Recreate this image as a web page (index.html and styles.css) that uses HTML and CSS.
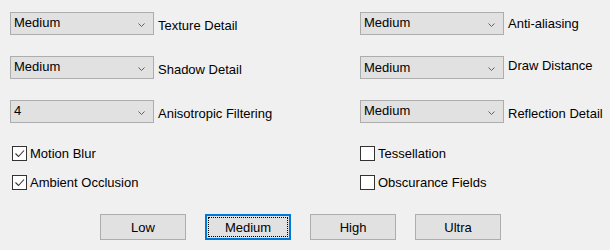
FILE: index.html
```html
<!DOCTYPE html>
<html>
<head>
<meta charset="utf-8">
<link rel="stylesheet" href="styles.css">
</head>
<body>
<div class="panel">
  <div class="combos">
    <div class="row">
      <div class="combo"><span>Medium</span><svg class="chev" width="7" height="4" viewBox="0 0 7 4"><polyline points="0.5,0.5 3.5,3.5 6.5,0.5" fill="none" stroke="#606060" stroke-width="1"/></svg></div>
      <span class="lbl off6">Texture Detail</span>
    </div>
    <div class="row">
      <div class="combo"><span>Medium</span><svg class="chev" width="7" height="4" viewBox="0 0 7 4"><polyline points="0.5,0.5 3.5,3.5 6.5,0.5" fill="none" stroke="#606060" stroke-width="1"/></svg></div>
      <span class="lbl off4">Anti-aliasing</span>
    </div>
    <div class="row">
      <div class="combo"><span>Medium</span><svg class="chev" width="7" height="4" viewBox="0 0 7 4"><polyline points="0.5,0.5 3.5,3.5 6.5,0.5" fill="none" stroke="#606060" stroke-width="1"/></svg></div>
      <span class="lbl off6">Shadow Detail</span>
    </div>
    <div class="row">
      <div class="combo"><span class="low1">Medium</span><svg class="chev" width="7" height="4" viewBox="0 0 7 4"><polyline points="0.5,0.5 3.5,3.5 6.5,0.5" fill="none" stroke="#606060" stroke-width="1"/></svg></div>
      <span class="lbl off2">Draw Distance</span>
    </div>
    <div class="row">
      <div class="combo"><span>4</span><svg class="chev" width="7" height="4" viewBox="0 0 7 4"><polyline points="0.5,0.5 3.5,3.5 6.5,0.5" fill="none" stroke="#606060" stroke-width="1"/></svg></div>
      <span class="lbl off6">Anisotropic Filtering</span>
    </div>
    <div class="row">
      <div class="combo"><span>Medium</span><svg class="chev" width="7" height="4" viewBox="0 0 7 4"><polyline points="0.5,0.5 3.5,3.5 6.5,0.5" fill="none" stroke="#606060" stroke-width="1"/></svg></div>
      <span class="lbl off6">Reflection Detail</span>
    </div>
  </div>

  <div class="checks">
    <div class="check left">
      <span class="box"><svg width="13" height="13" viewBox="0 0 13 13"><polyline points="2.5,6.5 5.5,9.5 11,3.5" fill="none" stroke="#333" stroke-width="1.1"/></svg></span>
      <span>Motion Blur</span>
    </div>
    <div class="check">
      <span class="box"></span>
      <span>Tessellation</span>
    </div>
    <div class="check left">
      <span class="box"><svg width="13" height="13" viewBox="0 0 13 13"><polyline points="2.5,6.5 5.5,9.5 11,3.5" fill="none" stroke="#333" stroke-width="1.1"/></svg></span>
      <span>Ambient Occlusion</span>
    </div>
    <div class="check">
      <span class="box"></span>
      <span>Obscurance Fields</span>
    </div>
  </div>

  <div class="buttons">
    <div class="btn">Low</div>
    <div class="btn focus"><span class="focusrect">Medium</span></div>
    <div class="btn">High</div>
    <div class="btn">Ultra</div>
  </div>
</div>
</body>
</html>
```

FILE: styles.css
```css
html, body {
  margin: 0;
  padding: 0;
  background: #f0f0f0;
}
body {
  width: 610px;
  height: 250px;
  overflow: hidden;
  font-family: "Liberation Sans", Arial, sans-serif;
  font-size: 13px;
  line-height: 15px;
  color: #000;
}
.panel {
  padding: 12px 0 0 10px;
}
.combos {
  display: grid;
  grid-template-columns: 350px auto;
  row-gap: 21px;
}
.row {
  display: flex;
  align-items: flex-start;
  gap: 4px;
}
.combo {
  box-sizing: border-box;
  width: 144px;
  height: 23px;
  border: 1px solid #adadad;
  background: #e1e1e1;
  display: flex;
  align-items: flex-start;
  justify-content: space-between;
  padding: 2px 8px 0 3px;
}
.combo .low1 {
  padding-top: 1px;
}
.chev {
  margin-top: 8px;
  display: block;
}
.lbl { white-space: nowrap; }
.off6 { padding-top: 6px; }
.off4 { padding-top: 4px; }
.off2 { padding-top: 2px; }

.checks {
  display: grid;
  grid-template-columns: 350px auto;
  row-gap: 14px;
  margin-top: 23px;
}
.check {
  display: flex;
  align-items: flex-start;
  gap: 3px;
  white-space: nowrap;
}
.check.left { padding-left: 2px; }
.box {
  box-sizing: border-box;
  width: 15px;
  height: 15px;
  border: 1px solid #333;
  background: #fff;
  display: flex;
  align-items: center;
  justify-content: center;
}
.box svg { display: block; }

.buttons {
  display: flex;
  gap: 19px;
  margin-top: 24px;
  padding-left: 90px;
}
.btn {
  box-sizing: border-box;
  width: 86px;
  height: 26px;
  border: 1px solid #adadad;
  background: #e1e1e1;
  display: flex;
  align-items: center;
  justify-content: center;
}
.btn.focus {
  border: 2px solid #0078d7;
  padding: 1px;
}
.focusrect {
  box-sizing: border-box;
  width: 100%;
  height: 100%;
  border: 1px dotted #000;
  display: flex;
  align-items: center;
  justify-content: center;
}
```
